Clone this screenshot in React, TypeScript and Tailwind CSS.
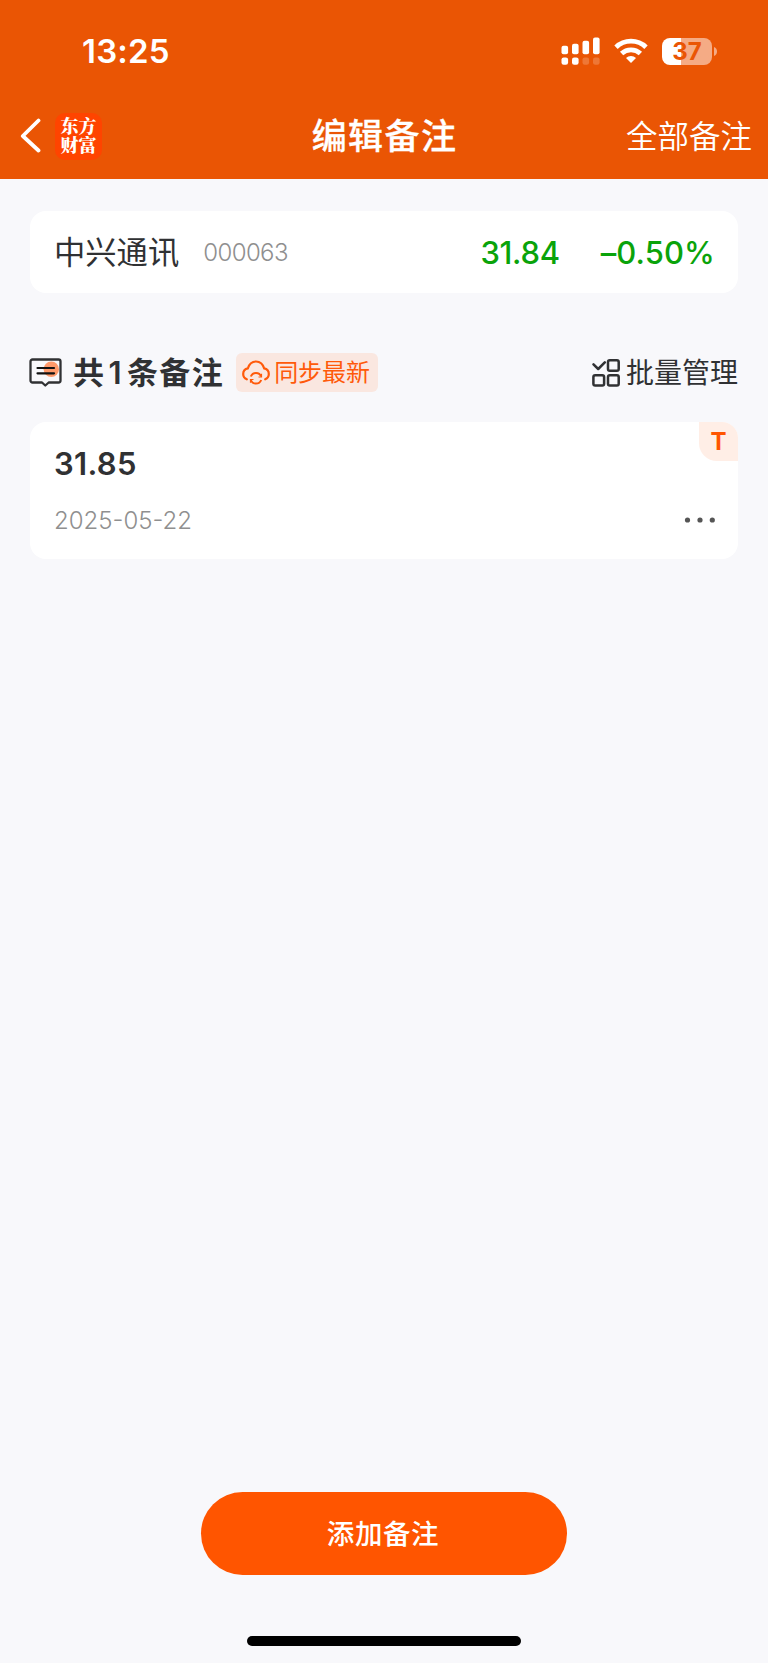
import React from "react";

const cjk = "font-['Inter','Noto_Sans_CJK_SC',sans-serif]";

function SignalIcon() {
  return (
    <svg width="40" height="28" viewBox="0 0 40 28" fill="#fff" className="shrink-0">
      <rect x="0.500" y="8.8" width="6.6" height="8.5" rx="2" />
      <rect x="11" y="6.8" width="6.6" height="10.5" rx="2" />
      <rect x="21.500" y="3.8" width="6.6" height="13.500" rx="2" />
      <rect x="32" y="0.500" width="6.6" height="16.800" rx="2" />
      <rect x="0.500" y="20.400" width="6.6" height="7.3" rx="2.2" />
      <rect x="11" y="20.400" width="6.6" height="7.3" rx="2.2" />
      <rect x="21.500" y="20.400" width="6.6" height="7.3" rx="2.2" opacity=".2" />
      <rect x="32" y="20.400" width="6.6" height="7.3" rx="2.2" opacity=".2" />
    </svg>
  );
}

function WifiIcon() {
  return (
    <svg width="34" height="26" viewBox="0 0 34 26" fill="none" stroke="#fff" strokeWidth="4.8" className="shrink-0">
      <path d="M2 9.2C10.3 1.200 23.7 1.200 32 9.2" />
      <path d="M7.6 15.5C12.9 10.6 21.1 10.6 26.4 15.5" />
      <path d="M17 25l-5-5c2.8-2.800 7.200-2.800 10 0z" fill="#fff" stroke="none" />
    </svg>
  );
}

function Battery() {
  return (
    <div className="flex items-center">
      <div className="flex h-[27px] w-[50px] items-center justify-center rounded-[8px] bg-linear-to-r from-white from-[38%] to-[#f5ab85] to-[38%]">
        <span className="font-['Inter',sans-serif] text-[24px] leading-[27px] font-bold text-[#ea5504]">37</span>
      </div>
      <svg width="5" height="9" viewBox="0 0 5 9" className="ml-px">
        <path d="M1 0C5 1.5 5 7.500 1 9z" fill="#f5ab85" />
      </svg>
    </div>
  );
}

function NoteIcon() {
  return (
    <svg width="33" height="29" viewBox="0 0 33 29" fill="none" className="shrink-0">
      <circle cx="22.300" cy="11.200" r="7.700" fill="#ff9a6b" />
      <path d="M3.500 1.500h26a2 2 0 0 1 2 2v19a2 2 0 0 1-2 2H19.700L16.300 27.500 13 24.500H3.500a2 2 0 0 1-2-2v-19a2 2 0 0 1 2-2z" stroke="#303133" strokeWidth="2.300" strokeLinejoin="round" />
      <path d="M8.500 10h16.500M8.500 15.300h16.500" stroke="#111" strokeWidth="2.200" strokeLinecap="round" />
    </svg>
  );
}

function CloudSyncIcon() {
  return (
    <svg width="28" height="25" viewBox="0 0 28 25" fill="none" stroke="#ff5a0a" strokeWidth="2.200" strokeLinecap="round" className="shrink-0">
      <path d="M4.800 19.300C2.600 18.300 1.200 16.300 1.200 13.900c0-2.900 2-5.100 4.700-5.600C7.100 4.200 10.200 1.500 14 1.500s6.900 2.700 8.100 6.800c2.700.5 4.700 2.700 4.700 5.600 0 2.400-1.400 4.400-3.600 5.400" />
      <path d="M8.800 16.500c.8-2.100 2.800-3.600 5.200-3.600s4.400 1.500 5.200 3.600M19.200 20c-.8 2.100-2.800 3.600-5.200 3.600S9.600 22.100 8.800 20" strokeWidth="2" strokeLinecap="butt" />
      <path d="M19.500 13.800v3.200h-3M8.500 22.700v-3.200h3" strokeWidth="1.200" strokeLinecap="butt" />
    </svg>
  );
}

function BatchIcon() {
  return (
    <svg width="28" height="28" viewBox="0 0 28 28" fill="none" stroke="#303133" strokeWidth="2.500" className="shrink-0">
      <path d="M1.500 5.300l4.700 4.700 6.600-6.600" strokeLinecap="round" strokeLinejoin="round" />
      <rect x="16" y="1.300" width="10.700" height="10.400" rx="1.800" />
      <rect x="1.400" y="16.200" width="10.700" height="10.400" rx="1.800" />
      <rect x="16" y="16.200" width="10.700" height="10.400" rx="1.800" />
    </svg>
  );
}

export default function App() {
  return (
    <div className={`flex h-[1663px] w-[768px] flex-col bg-[#f8f8fb] text-[#303133] ${cjk}`}>
      <header className="h-[179px] shrink-0 bg-[#ea5504] text-white">
        <div className="flex h-[102px] items-center pl-[82px]">
          <span className="w-[479px] pt-px font-['Inter',sans-serif] text-[33px] leading-none font-semibold tracking-[.2px]">13:25</span>
          <SignalIcon />
          <div className="pl-[13px]"><WifiIcon /></div>
          <div className="pl-[14px]"><Battery /></div>
        </div>
        <div className="grid h-[68px] grid-cols-[1fr_auto_1fr] items-center pr-[15px] pl-[20px]">
          <div className="flex items-center">
            <svg width="22" height="36" viewBox="0 0 22 36" fill="none" stroke="#fff" strokeWidth="3.800" strokeLinecap="round" strokeLinejoin="round">
              <path d="M18.500 2.500L2.800 18 18.500 32.500" />
            </svg>
            <div className="ml-[13px] flex size-[47px] items-center justify-center rounded-[10px] bg-[#ff4400]">
              <p className="w-[36px] pb-[2px] font-['Noto_Serif_CJK_SC','Noto_Sans_CJK_SC',serif] text-[18px] leading-[19.500px] font-black break-all">东方财富</p>
            </div>
          </div>
          <h1 className="pt-px pr-[4px] text-[35px] leading-none font-medium tracking-[1.400px] [-webkit-text-stroke:.3px_white]">编辑备注</h1>
          <span className="justify-self-end pt-px pr-px text-[31.500px] leading-none font-[350]">全部备注</span>
        </div>
      </header>

      <main className="flex flex-1 flex-col px-[30px] pt-[32px]">
        <section className="flex h-[82px] items-center rounded-[16px] bg-white pr-[25px] pl-[24px]">
          <span className="pt-[3px] text-[31.300px] leading-none">中兴通讯</span>
          <span className="ml-[24px] pt-[2px] text-[24px] leading-none font-light tracking-[-.6px] text-[#8f8f8f]">000063</span>
          <span className="ml-auto text-[31px] leading-none font-medium tracking-[-.3px] text-[#0aa30a]">31.84</span>
          <span className="-mr-[2px] ml-[41px] text-[31px] leading-none font-medium tracking-[.1px] text-[#0aa30a]">–0.50%</span>
        </section>

        <div className="-ml-px mt-[60px] flex h-[39px] items-center">
          <NoteIcon />
          <h2 className="ml-[11px] text-[31px] leading-none font-semibold tracking-[1.400px] whitespace-nowrap">
            共<span className="mr-[4px] ml-[3px]">1</span>条备注
          </h2>
          <button className="ml-[12px] flex h-[39px] w-[142px] items-center gap-[4px] rounded-[6px] bg-[#fae7e0] pl-[6px] text-[24px] leading-none whitespace-nowrap text-[#ff5a0a]">
            <CloudSyncIcon />
            <span className="pt-px">同步最新</span>
          </button>
          <button className="ml-auto flex items-center gap-[6px] text-[28px] leading-none">
            <BatchIcon />
            <span className="pt-px">批量管理</span>
          </button>
        </div>

        <section className="relative mt-[30px] flex h-[137px] flex-col rounded-[16px] bg-white pr-[22px] pl-[24px]">
          <span className="pt-[26px] text-[31px] leading-[32px] font-semibold tracking-[.3px]">31.85</span>
          <div className="mt-[24px] flex items-center justify-between">
            <span className="pt-px text-[24px] leading-[32px] font-light text-[#8f8f8f]">2025-05-22</span>
            <svg width="32" height="6" viewBox="0 0 32 6" fill="#555" className="-mt-[2px]">
              <circle cx="3.500" cy="3" r="2.600" />
              <circle cx="16" cy="3" r="2.600" />
              <circle cx="28.300" cy="3" r="2.600" />
            </svg>
          </div>
          <span className="absolute top-0 right-0 flex size-[39px] items-center justify-center rounded-tr-[16px] rounded-bl-[18px] bg-[#ffeee6] pt-px text-[24px] leading-none font-bold text-[#ff5500]">T</span>
        </section>

        <div className="mt-auto flex flex-col items-center pb-[17px]">
          <button className="h-[83px] w-[366px] rounded-full bg-[#ff5500] pt-[2px] pr-[2px] text-[27.500px] leading-none font-medium tracking-[.6px] text-white">添加备注</button>
          <div className="mt-[61px] h-[10px] w-[274px] rounded-full bg-black" />
        </div>
      </main>
    </div>
  );
}
